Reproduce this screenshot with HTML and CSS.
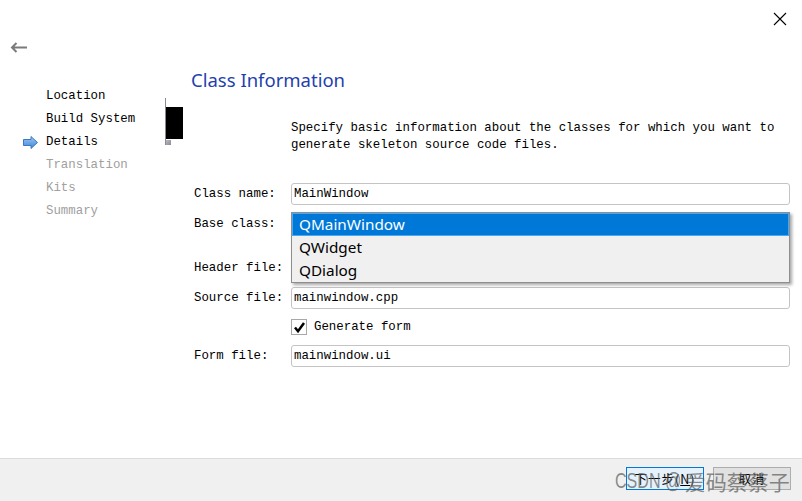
FILE: index.html
```html
<!DOCTYPE html>
<html>
<head>
<meta charset="utf-8">
<link rel="stylesheet" href="styles.css">
</head>
<body>
<div class="window">
  <div class="titlebar">
    <svg class="close" width="14" height="14" viewBox="0 0 14 14"><path d="M1 1 L13 13 M13 1 L1 13" stroke="#000" stroke-width="1.1" fill="none"/></svg>
  </div>
  <div class="backrow">
    <svg class="back" width="18" height="11" viewBox="0 0 18 11"><path d="M17 5.5 H2 M6.5 1 L2 5.5 L6.5 10" stroke="#7a7a7a" stroke-width="2" fill="none"/></svg>
  </div>
  <div class="main">
    <ul class="nav">
      <li class="done">Location</li>
      <li class="done">Build System</li>
      <li class="current"><svg class="cur-arrow" width="15" height="13" viewBox="0 0 15 13"><defs><linearGradient id="ag" x1="0" y1="0" x2="0" y2="1"><stop offset="0" stop-color="#9cc8f5"/><stop offset="1" stop-color="#3f86d6"/></linearGradient></defs><path d="M0.5 3.5 H8 V0.5 L14.5 6.5 L8 12.5 V9.5 H0.5 Z" fill="url(#ag)" stroke="#3a78c4" stroke-width="1"/></svg>Details</li>
      <li class="todo">Translation</li>
      <li class="todo">Kits</li>
      <li class="todo">Summary</li>
    </ul>
    <div class="splitter">
      <div class="handle"></div>
      <div class="grip"></div>
    </div>
    <div class="content">
      <h1 class="title">Class Information</h1>
      <p class="desc">Specify basic information about the classes for which you want to<br>generate skeleton source code files.</p>
      <div class="form">
        <div class="row">
          <span class="label">Class name:</span>
          <div class="field"><div class="input">MainWindow</div></div>
        </div>
        <div class="row row-base">
          <span class="label">Base class:</span>
          <div class="field">
            <div class="input combo">QMainWindow</div>
            <ul class="popup">
              <li class="sel">QMainWindow</li>
              <li>QWidget</li>
              <li>QDialog</li>
            </ul>
          </div>
        </div>
        <div class="row">
          <span class="label">Header file:</span>
          <div class="field"><div class="input">mainwindow.h</div></div>
        </div>
        <div class="row">
          <span class="label">Source file:</span>
          <div class="field"><div class="input">mainwindow.cpp</div></div>
        </div>
        <div class="row row-check">
          <span class="label"></span>
          <div class="field check-field">
            <span class="checkbox"><svg width="13" height="13" viewBox="0 0 13 13"><path d="M2 6.5 L5 10.2 L11 2" stroke="#000" stroke-width="2.5" fill="none"/></svg></span>
            <span class="check-text">Generate form</span>
          </div>
        </div>
        <div class="row">
          <span class="label">Form file:</span>
          <div class="field"><div class="input">mainwindow.ui</div></div>
        </div>
      </div>
    </div>
  </div>
  <div class="footer">
    <button class="btn btn-default">下一步(<u>N</u>)</button>
    <button class="btn">取消</button>
    <span class="watermark"><span class="wm-latin">CSDN @</span><span class="wm-cjk">爱码蔡蔡子</span></span>
  </div>
</div>
</body>
</html>
```

FILE: styles.css
```css
* { box-sizing: border-box; }
html, body { margin: 0; padding: 0; background: #fff; }
body { width: 802px; height: 501px; overflow: hidden; }

.window {
  width: 802px;
  height: 501px;
  display: flex;
  flex-direction: column;
  background: #fff;
  font-family: "Liberation Mono", "DejaVu Sans Mono", monospace;
  font-size: 12.4px;
  color: #000;
}

.titlebar {
  height: 38px;
  display: flex;
  justify-content: flex-end;
  align-items: flex-start;
  padding: 12px 15px 0 0;
}
.close { display: block; }

.backrow {
  height: 21px;
  padding: 4px 0 0 10px;
}
.back { display: block; }

.main {
  flex: 1;
  display: flex;
  min-height: 0;
}

.nav {
  list-style: none;
  margin: 0;
  padding: 26px 0 0 23px;
  width: 165px;
  flex: none;
}
.nav li {
  height: 23px;
  line-height: 23px;
  display: flex;
  align-items: center;
  white-space: nowrap;
}
.nav li.done, .nav li.todo { padding-left: 23px; }
.nav li.todo { color: #a0a0a0; }
.cur-arrow { margin-right: 8px; flex: none; }

.splitter {
  width: 26px;
  flex: none;
  margin-top: 39px;
  height: 47px;
  border-left: 1px solid #8a8a96;
  display: flex;
  flex-direction: column;
}
.handle {
  margin-top: 9px;
  width: 17px;
  height: 32px;
  background: #000;
}
.grip {
  margin-top: 1px;
  width: 5px;
  height: 5px;
  background: linear-gradient(to bottom right, #b8b8c4 0%, #8a8a96 100%);
}

.content {
  flex: 1;
  padding: 9px 12px 0 0;
}

.title {
  margin: 0;
  font-family: "Noto Sans", "Open Sans", sans-serif;
  font-weight: normal;
  font-size: 18.5px;
  line-height: 24px;
  color: #1f3fae;
}

.desc {
  margin: 28px 0 0 100px;
  line-height: 17px;
  white-space: nowrap;
}

.form {
  margin: 29px 0 0 3px;
  display: flex;
  flex-direction: column;
  gap: 8px;
}
.row {
  display: flex;
  align-items: center;
  height: 22px;
}
.row-base { margin-bottom: 14px; }
.row-check { height: 20px; }
.label {
  width: 97px;
  flex: none;
  white-space: nowrap;
}
.field {
  flex: 1;
  position: relative;
  height: 100%;
}
.input {
  height: 22px;
  border: 1px solid #c4c4c4;
  border-radius: 3px;
  background: #fff;
  padding: 0 2px;
  line-height: 20px;
  white-space: nowrap;
}

.popup {
  position: absolute;
  left: 0;
  right: 0;
  top: -1px;
  height: 71px;
  margin: 0;
  padding: 0;
  list-style: none;
  background: #f0f0f0;
  border: 1px solid #8e8e8e;
  box-shadow: 2px 2px 3px rgba(0, 0, 0, 0.35);
  font-family: "Noto Sans", "Open Sans", sans-serif;
  font-size: 15.3px;
  color: #000;
  z-index: 2;
}
.popup li {
  height: 23px;
  line-height: 21px;
  padding-left: 6px;
  border: 1px solid transparent;
}
.popup li.sel {
  background: #0078d7;
  border-color: #4aa8f2;
  color: #fff;
}

.check-field {
  display: flex;
  align-items: center;
}
.checkbox {
  width: 16px;
  height: 16px;
  border: 1px solid #a8a8a8;
  background: #fff;
  display: flex;
  align-items: center;
  justify-content: center;
  flex: none;
}
.checkbox svg { display: block; }
.check-text { margin-left: 7px; }

.footer {
  position: relative;
  height: 43px;
  flex: none;
  background: #f0f0f0;
  border-top: 1px solid #dcdcdc;
  display: flex;
  justify-content: flex-end;
  align-items: flex-start;
  gap: 9px;
  padding: 8px 11px 0 0;
}
.btn {
  width: 78px;
  height: 23px;
  margin: 0;
  padding: 0;
  border: 1px solid #adadad;
  background: #e1e1e1;
  font-family: "Noto Sans CJK SC", "Noto Sans", sans-serif;
  font-size: 12.5px;
  letter-spacing: 1px;
  color: #000;
  line-height: 21px;
}
.btn-default {
  border-color: #0078d7;
  background: #e5f1fb;
}
.watermark {
  position: absolute;
  left: 615px;
  top: 9px;
  display: flex;
  align-items: center;
  height: 26px;
  white-space: nowrap;
  color: rgba(95, 95, 95, 0.72);
  pointer-events: none;
}
.wm-latin {
  display: inline-block;
  font-family: "Liberation Sans", sans-serif;
  font-size: 22px;
  line-height: 26px;
  transform: scaleX(0.73);
  transform-origin: left center;
  margin-right: -23px;
}
.wm-cjk {
  font-family: "Noto Sans CJK SC", sans-serif;
  font-size: 21px;
  line-height: 26px;
  margin-left: 2px;
}
```
